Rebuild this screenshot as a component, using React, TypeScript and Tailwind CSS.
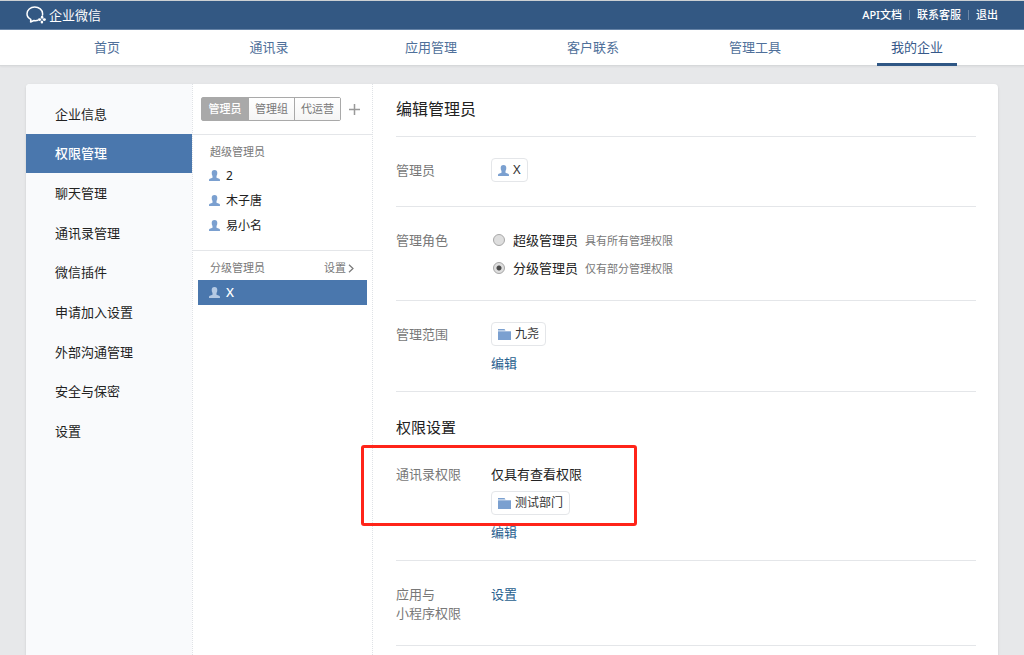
import type { ReactNode } from 'react';

const navItems = ['首页', '通讯录', '应用管理', '客户联系', '管理工具', '我的企业'];
const sideItems = ['企业信息', '权限管理', '聊天管理', '通讯录管理', '微信插件', '申请加入设置', '外部沟通管理', '安全与保密', '设置'];
const tabs = ['管理员', '管理组', '代运营'];
const superAdmins = ['2', '木子唐', '易小名'];

function Logo() {
  return (
    <svg viewBox="0 0 20 18" className="h-[18px] w-5" fill="none" aria-hidden="true">
      <path
        d="M11.8 14.3c-1.2.4-2.6.4-3.9.2L4.6 16l.2-2.6C2.4 12.1 1 10 1 7.700 1 4 4.400 1 8.700 1s7.900 2.900 7.900 6.700c0 .5 0 .9-.1 1.300"
        stroke="currentColor"
        strokeWidth="1.500"
        strokeLinecap="round"
        strokeLinejoin="round"
      />
      <g fill="currentColor">
        <ellipse cx="16.100" cy="11.200" rx="1.300" ry="1.600" />
        <ellipse cx="18.300" cy="13.600" rx="1.600" ry="1.300" />
        <ellipse cx="15.900" cy="16" rx="1.300" ry="1.600" />
        <ellipse cx="13.600" cy="13.600" rx="1.600" ry="1.300" />
      </g>
    </svg>
  );
}

function PersonIcon({ className }: { className: string }) {
  return (
    <svg viewBox="0 0 11 11" className={`h-[11px] w-[11px] shrink-0 ${className}`} fill="currentColor" aria-hidden="true">
      <path d="M5.5 0C7.500 0 8.300 1.200 8.300 3c0 1.300-.3 2.300-.8 3v1.800l2.700 1c.6.200.8.700.8 2.200H0c0-1.500.2-2 .8-2.200l2.700-1V6C3 5.300 2.700 4.300 2.700 3 2.700 1.200 3.500 0 5.500 0z" />
    </svg>
  );
}

function FolderIcon() {
  return (
    <svg viewBox="0 0 13 11" className="h-[11px] w-[13px] shrink-0 text-[#7ba0d0]" fill="currentColor" aria-hidden="true">
      <path d="M0 0h6.500l1 1.400H0z" />
      <path d="M0 2.300h13V11H0z" />
    </svg>
  );
}

function Chip({ icon, children }: { icon: ReactNode; children: ReactNode }) {
  return (
    <span className="inline-flex h-6 items-center gap-1 rounded-sm border border-[#e4e6e9] bg-white px-1.5 text-xs text-[#333]">
      {icon}
      {children}
    </span>
  );
}

function Row({ label, children }: { label: ReactNode; children: ReactNode }) {
  return (
    <div className="flex">
      <div className="w-[95px] shrink-0 text-[#787878]">{label}</div>
      <div className="flex min-w-0 flex-1 flex-col items-start">{children}</div>
    </div>
  );
}

function RoleOption({ id, label, hint, checked }: { id: string; label: string; hint: string; checked?: boolean }) {
  return (
    <div className="flex h-7 items-center">
      <input
        type="radio"
        id={id}
        name="role"
        defaultChecked={checked}
        className="mr-2 ml-0.5 h-3 w-3 appearance-none rounded-full border border-[#a8a8a8] bg-[#dedede] checked:bg-[radial-gradient(circle,#4a4a4a_0_2px,#dedede_3px)]"
      />
      <label htmlFor={id} className="text-[#222]">
        {label}
        <span className="ml-[7px] text-[11px] text-[#787878]">{hint}</span>
      </label>
    </div>
  );
}

export default function App() {
  return (
    <div className="flex min-h-screen flex-col bg-[#e7e8ea] font-['Noto_Sans','Noto_Sans_CJK_SC',sans-serif] text-[13px] leading-5 text-[#222]">
      <header className="flex h-[30px] items-center justify-between border-t border-b border-t-[#ccd0d3] border-b-[#6683a6] bg-[#335883] px-[26px] text-white">
        <a href="#home" className="flex items-center gap-[3px]">
          <Logo />
          <span>企业微信</span>
        </a>
        <div className="flex items-center text-[11px] font-medium">
          <a href="#api">API文档</a>
          <span className="mx-[7px] h-2.5 w-px bg-[#6d88a8]" />
          <a href="#service">联系客服</a>
          <span className="mx-[7px] h-2.5 w-px bg-[#6d88a8]" />
          <a href="#logout">退出</a>
        </div>
      </header>

      <nav className="flex h-9 border-b border-[#d6d8da] bg-white px-[26px] shadow-xs">
        {navItems.map((item) => (
          <a key={item} href="#nav" className="flex flex-1 justify-center text-[#4f709a]">
            <span
              className={
                item === '我的企业'
                  ? '-mb-px w-20 border-b-[3px] border-[#2f5785] pt-[7px] text-center text-[#36598a]'
                  : 'w-20 pt-[7px] text-center'
              }
            >
              {item}
            </span>
          </a>
        ))}
      </nav>

      <div className="mx-[26px] mt-[18px] flex flex-1 rounded-t-sm bg-white shadow-sm">
        <aside className="w-[166px] shrink-0 rounded-tl-sm bg-[#f9fafc] pt-2.5">
          <ul className="grid h-[357px] grid-rows-9">
            {sideItems.map((item) => (
              <li key={item} className="flex">
                <a
                  href="#side"
                  className={
                    item === '权限管理'
                      ? 'flex flex-1 items-center bg-[#4a77ad] pl-[29px] font-medium text-white'
                      : 'flex flex-1 items-center pl-[29px]'
                  }
                >
                  {item}
                </a>
              </li>
            ))}
          </ul>
        </aside>

        <section className="w-[181px] shrink-0 border-x border-dotted border-[#dfe2e6] text-xs">
          <div className="flex h-[51px] items-center border-b border-[#e4e6e9] pl-2">
            <div className="flex h-6 rounded-xs border border-[#a9a9a9] text-[11px] text-[#777]">
              {tabs.map((tab, i) => (
                <button
                  key={tab}
                  type="button"
                  className={
                    i === 0
                      ? 'w-[46px] bg-[#a9a9a9] font-medium text-white'
                      : 'w-[46px] border-l border-[#a9a9a9] bg-linear-to-b from-white to-[#f5f5f5]'
                  }
                >
                  {tab}
                </button>
              ))}
            </div>
            <button type="button" aria-label="添加" className="ml-2 text-[#999]">
              <svg viewBox="0 0 11 11" className="h-[11px] w-[11px]" stroke="currentColor" strokeWidth="1.500" aria-hidden="true">
                <path d="M5.500 0v11M0 5.500h11" />
              </svg>
            </button>
          </div>

          <div className="border-b border-[#e4e6e9] pt-[7px] pb-3">
            <h2 className="mb-px pl-[17px] text-[11px] leading-5 text-[#787878]">超级管理员</h2>
            <ul>
              {superAdmins.map((name) => (
                <li key={name} className="flex h-[25px] items-center gap-1.5 pl-4">
                  <PersonIcon className="text-[#7ba0d0]" />
                  {name}
                </li>
              ))}
            </ul>
          </div>

          <div className="pt-[7px]">
            <div className="mb-0.5 flex justify-between pr-[18px] pl-[17px] text-[11px] leading-5 text-[#787878]">
              <h2>分级管理员</h2>
              <a href="#settings" className="flex items-center gap-0.5">
                设置
                <svg viewBox="0 0 6 9" className="h-[9px] w-1.5" fill="none" stroke="currentColor" strokeWidth="1.200" aria-hidden="true">
                  <path d="M1 .7l4 3.800-4 3.800" />
                </svg>
              </a>
            </div>
            <div className="mx-[5px] flex h-[25px] items-center gap-1.5 bg-[#4a77ad] pl-[11px] text-[13px] font-medium text-white">
              <PersonIcon className="text-[#b5cae4]" />X
            </div>
          </div>
        </section>

        <main className="min-w-0 flex-1 pr-[22px] pl-[23px]">
          <h1 className="border-b border-[#e4e6e9] pt-[15px] pb-[17px] text-base leading-5">编辑管理员</h1>

          <div className="border-b border-[#e4e6e9] pt-[21px] pb-6">
            <Row label={<span className="leading-6">管理员</span>}>
              <Chip icon={<PersonIcon className="text-[#7ba0d0]" />}>
                <span className="text-[13px]">X</span>
              </Chip>
            </Row>
          </div>

          <div className="border-b border-[#e4e6e9] pt-[19px] pb-[18px]">
            <Row label={<span className="leading-7">管理角色</span>}>
              <RoleOption id="role-super" label="超级管理员" hint="具有所有管理权限" />
              <RoleOption id="role-sub" label="分级管理员" hint="仅有部分管理权限" checked />
            </Row>
          </div>

          <div className="border-b border-[#e4e6e9] pt-[21px] pb-[18px]">
            <Row label={<span className="leading-6">管理范围</span>}>
              <Chip icon={<FolderIcon />}>九尧</Chip>
              <a href="#scope" className="mt-[7px] text-[#28608f]">编辑</a>
            </Row>
          </div>

          <div className="relative border-b border-[#e4e6e9] pt-[25px] pb-[18px]">
            <h2 className="text-[15px] leading-5">权限设置</h2>
            <div className="mt-[27px]">
              <Row label="通讯录权限">
                <span>仅具有查看权限</span>
                <span className="mt-[7px] flex">
                  <Chip icon={<FolderIcon />}>测试部门</Chip>
                </span>
                <a href="#contacts" className="mt-[7px] text-[#28608f]">编辑</a>
              </Row>
            </div>
            <div className="pointer-events-none absolute top-[53px] -left-[35px] h-[81px] w-[276px] rounded-[3px] border-[3px] border-[#ff2419]" />
          </div>

          <div className="border-b border-[#e4e6e9] pt-6 pb-[22px]">
            <Row
              label={
                <p className="leading-[19px]">
                  应用与
                  <br />
                  小程序权限
                </p>
              }
            >
              <a href="#apps" className="leading-[19px] text-[#28608f]">设置</a>
            </Row>
          </div>
        </main>
      </div>
    </div>
  );
}
